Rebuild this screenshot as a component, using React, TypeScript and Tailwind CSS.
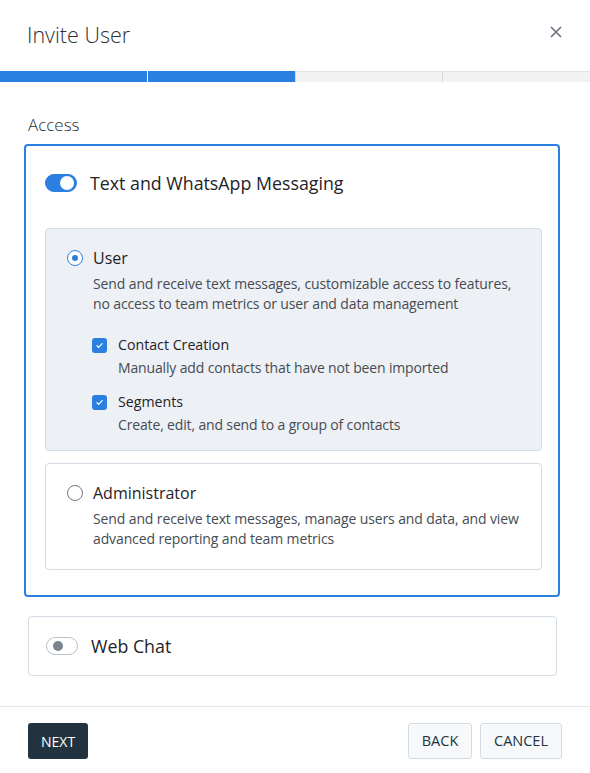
import { useState } from "react";

function Toggle({ on }: { on: boolean }) {
  return (
    <span
      className={`relative inline-flex h-[18px] w-[32px] shrink-0 items-center rounded-full border ${
        on ? "border-[#2b7fe0] bg-[#2b7fe0]" : "border-[#b9c2cc] bg-white"
      }`}
    >
      <span
        className={`absolute rounded-full ${
          on ? "right-[2px] h-[14px] w-[14px] bg-white" : "left-[6px] h-[10px] w-[10px] bg-[#7b8590]"
        }`}
      />
    </span>
  );
}

function Radio({ checked }: { checked: boolean }) {
  return (
    <span
      className={`flex h-4 w-4 shrink-0 items-center justify-center rounded-full border-[1.5px] bg-white ${
        checked ? "border-[#2b7fe0]" : "border-[#6f7882]"
      }`}
    >
      {checked && <span className="h-[6px] w-[6px] rounded-full bg-[#2b7fe0]" />}
    </span>
  );
}

function Check() {
  return (
    <span className="flex h-[15px] w-[15px] shrink-0 items-center justify-center rounded-[3px] bg-[#2b7fe0]">
      <svg viewBox="0 0 12 12" className="h-[9px] w-[9px]" fill="none">
        <path d="M2.5 6.2l2.3 2.2 4.7-4.8" stroke="white" strokeWidth="1.6" strokeLinecap="round" strokeLinejoin="round" />
      </svg>
    </span>
  );
}

export default function App() {
  const [messaging] = useState(true);
  const steps = [true, true, false, false];

  return (
    <div
      className="flex h-[773px] w-[590px] flex-col bg-white text-[#2b2f33]"
      style={{ fontFamily: '"Open Sans", "Liberation Sans", sans-serif' }}
    >
      {/* Header */}
      <div className="flex h-[71px] items-start justify-between pl-[27px] pr-[28px] pt-[20px]">
        <h1 className="text-[21.5px] font-light leading-[30px] text-[#2b2f33]">Invite User</h1>
        <button className="mt-[6px] text-[#6b7680]">
          <svg viewBox="0 0 12 12" className="h-[12px] w-[12px]" fill="none">
            <path d="M1.5 1.5l9 9M10.5 1.5l-9 9" stroke="currentColor" strokeWidth="1.7" strokeLinecap="round" />
          </svg>
        </button>
      </div>

      {/* Progress */}
      <div className="flex h-[11px]">
        {steps.map((done, i) => (
          <div
            key={i}
            className={`h-full flex-1 ${
              done
                ? "bg-[#2b7fe0]"
                : "border-t border-[#e3e3e3] bg-[#f2f2f2]"
            } ${i > 0 ? (done ? "border-l border-l-white" : "border-l border-l-[#d9d9d9]") : ""}`}
          />
        ))}
      </div>

      {/* Body */}
      <div className="flex-1 px-[24px] pt-[31px]">
        <div className="pl-[4px] text-[17px] font-light leading-[24px] text-[#2b2f33]">Access</div>

        <div className="mt-[7px] w-[536px] rounded-[4px] border-2 border-[#2b7fe0] pb-[25px] pl-[19px] pr-[16px] pt-[25px]">
          <div className="flex h-[24px] items-center gap-[13px]">
            <Toggle on={messaging} />
            <span className="text-[17.8px] leading-[24px] text-[#1f2327]">Text and WhatsApp Messaging</span>
          </div>

          <div className="mt-[33px] rounded-[4px] border border-[#d3dbe5] bg-[#edf0f5] pb-[15px] pl-[21px] pr-[16px] pt-[17px]">
            <div className="flex gap-[10px]">
              <div className="flex h-[24px] items-center">
                <Radio checked />
              </div>
              <div>
                <div className="text-[16px] leading-[24px] text-[#1f2327]">User</div>
                <p className="mt-[4px] text-[14px] leading-[20px] tracking-[-0.12px] text-[#464c52]">
                  Send and receive text messages, customizable access to features, no access to team metrics or user and data management
                </p>

                <div className="mt-[21px] ml-[-1px] flex gap-[11px]">
                  <div className="flex h-[20px] items-center">
                    <Check />
                  </div>
                  <div>
                    <div className="text-[14.2px] leading-[20px] text-[#1f2327]">Contact Creation</div>
                    <p className="mt-[3px] text-[14px] leading-[20px] tracking-[-0.15px] text-[#464c52]">
                      Manually add contacts that have not been imported
                    </p>
                  </div>
                </div>

                <div className="mt-[14px] ml-[-1px] flex gap-[11px]">
                  <div className="flex h-[20px] items-center">
                    <Check />
                  </div>
                  <div>
                    <div className="text-[14.2px] leading-[20px] text-[#1f2327]">Segments</div>
                    <p className="mt-[3px] text-[14px] leading-[20px] tracking-[-0.15px] text-[#464c52]">
                      Create, edit, and send to a group of contacts
                    </p>
                  </div>
                </div>
              </div>
            </div>
          </div>

          <div className="mt-[12px] rounded-[4px] border border-[#d3dbe5] bg-white pb-[20px] pl-[21px] pr-[16px] pt-[17px]">
            <div className="flex gap-[10px]">
              <div className="flex h-[24px] items-center">
                <Radio checked={false} />
              </div>
              <div>
                <div className="text-[16px] leading-[24px] text-[#1f2327]">Administrator</div>
                <p className="mt-[4px] text-[14px] leading-[20px] tracking-[-0.12px] text-[#464c52]">
                  Send and receive text messages, manage users and data, and view advanced reporting and team metrics
                </p>
              </div>
            </div>
          </div>
        </div>

        <div className="ml-[4px] mt-[19px] flex h-[60px] w-[529px] items-center gap-[13px] rounded-[4px] border border-[#d3dbe5] pl-[17px]">
          <Toggle on={false} />
          <span className="text-[17.8px] leading-[24px] text-[#1f2327]">Web Chat</span>
        </div>
      </div>

      {/* Footer */}
      <div className="flex h-[67px] items-start justify-between border-t border-[#e3e6ea] px-[28px] pt-[16px]">
        <button className="h-[36px] rounded-[3px] bg-[#22333f] px-[13px] text-[14px] text-white">NEXT</button>
        <div className="flex gap-[8px]">
          <button className="h-[36px] w-[64px] rounded-[3px] border border-[#d3dbe5] bg-[#f6f8fa] text-[14.5px] text-[#22333f]">
            BACK
          </button>
          <button className="h-[36px] w-[82px] rounded-[3px] border border-[#d3dbe5] bg-[#f6f8fa] text-[14.5px] text-[#22333f]">
            CANCEL
          </button>
        </div>
      </div>
    </div>
  );
}
